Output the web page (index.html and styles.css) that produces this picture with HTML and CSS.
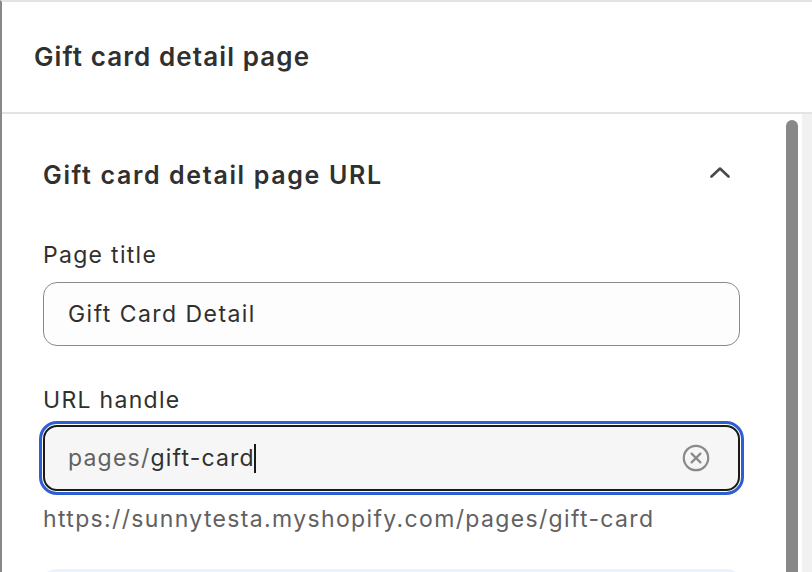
FILE: index.html
```html
<!DOCTYPE html>
<html lang="en">
<head>
<meta charset="utf-8">
<title>Gift card detail page</title>
<link rel="stylesheet" href="styles.css">
</head>
<body>
<div class="panel">
  <header class="header">
    <h1 class="header-title">Gift card detail page</h1>
  </header>
  <div class="body">
    <main class="scroll">
      <div class="section-head">
        <h2 class="section-title">Gift card detail page URL</h2>
        <svg class="chevron" width="20" height="12" viewBox="0 0 20 12" aria-hidden="true">
          <path d="M1.5 10.5 L10 2.5 L18.5 10.5" fill="none" stroke="#4a4a4a" stroke-width="2.6" stroke-linecap="round" stroke-linejoin="round"/>
        </svg>
      </div>
      <label class="label label-first">Page title</label>
      <div class="input">
        <span class="value value-title">Gift Card Detail</span>
      </div>
      <label class="label label-second">URL handle</label>
      <div class="input input-focus">
        <span class="prefix">pages/</span><span class="value">gift-card</span><span class="caret"></span>
        <svg class="clear" width="28" height="28" viewBox="0 0 28 28" aria-hidden="true">
          <circle cx="14" cy="14" r="12.2" fill="none" stroke="#8a8a8a" stroke-width="2.2"/>
          <path d="M9.6 9.6 L18.4 18.4 M18.4 9.6 L9.6 18.4" stroke="#8a8a8a" stroke-width="2.2" stroke-linecap="round"/>
        </svg>
      </div>
      <p class="helper">https://sunnytesta.myshopify.com/pages/gift-card</p>
      <div class="banner"></div>
    </main>
    <div class="scrollbar"><div class="thumb"></div></div>
    <div class="track"></div>
  </div>
</div>
</body>
</html>
```

FILE: styles.css
```css
* { box-sizing: border-box; }
html, body {
  margin: 0;
  padding: 0;
  background: #ffffff;
  overflow: hidden;
}
body {
  font-family: Inter, "Noto Sans", "Liberation Sans", sans-serif;
  color: #303030;
}
.panel {
  width: 812px;
  height: 572px;
  display: flex;
  flex-direction: column;
  border-left: 2px solid #888888;
  border-top: 2px solid #e3e3e3;
}
.header {
  height: 112px;
  flex: none;
  display: flex;
  align-items: center;
  padding-left: 32px;
  border-bottom: 2px solid #e3e3e3;
}
.header-title {
  margin: 0;
  font-size: 26px;
  font-weight: 600;
  line-height: 32px;
  color: #303030;
  letter-spacing: 1.1px;
}
.body {
  flex: 1;
  display: flex;
  min-height: 0;
}
.scroll {
  flex: 1;
  padding: 45px 46px 0 41px;
  overflow: hidden;
}
.section-head {
  display: flex;
  align-items: center;
  justify-content: space-between;
  height: 32px;
}
.section-title {
  margin: 0;
  font-size: 25px;
  font-weight: 600;
  line-height: 32px;
  color: #303030;
  letter-spacing: 1.65px;
}
.chevron {
  margin-right: 10px;
  margin-top: -6px;
}
.label {
  display: block;
  font-size: 23px;
  line-height: 28px;
  color: #303030;
  letter-spacing: 1.3px;
}
.label-first { margin-top: 50px; }
.label-second { margin-top: 40px; }
.input {
  display: flex;
  align-items: center;
  height: 64px;
  margin-top: 13px;
  padding-left: 24px;
  border: 1px solid #8a8a8a;
  border-radius: 14px;
  background: #fdfdfd;
  font-size: 23px;
  letter-spacing: 1.2px;
}
.value-title { letter-spacing: 1.45px; }
.input-focus {
  margin-top: 11px;
  height: 66px;
  padding-left: 23px;
  padding-right: 28px;
  border: 2px solid #1a1a1a;
  background: #f6f6f6;
  outline: 3.5px solid #2c5fd2;
  outline-offset: 1.5px;
}
.value { color: #303030; }
.prefix { color: #616161; }
.caret {
  display: inline-block;
  width: 2px;
  height: 29px;
  margin-left: -1px;
  background: #1a1a1a;
}
.clear { margin-left: auto; }
.helper {
  margin: 14px 0 0;
  font-size: 23px;
  line-height: 28px;
  color: #616161;
  letter-spacing: 1.35px;
}
.banner {
  margin-top: 36px;
  height: 40px;
  border-radius: 12px;
  background: #eaf4ff;
}
.scrollbar {
  width: 16px;
  flex: none;
  padding-top: 6px;
}
.thumb {
  width: 12px;
  height: 100%;
  background: #888888;
  border-radius: 6px 6px 0 0;
}
.track {
  width: 10px;
  flex: none;
  background: #f1f1f1;
}
```
